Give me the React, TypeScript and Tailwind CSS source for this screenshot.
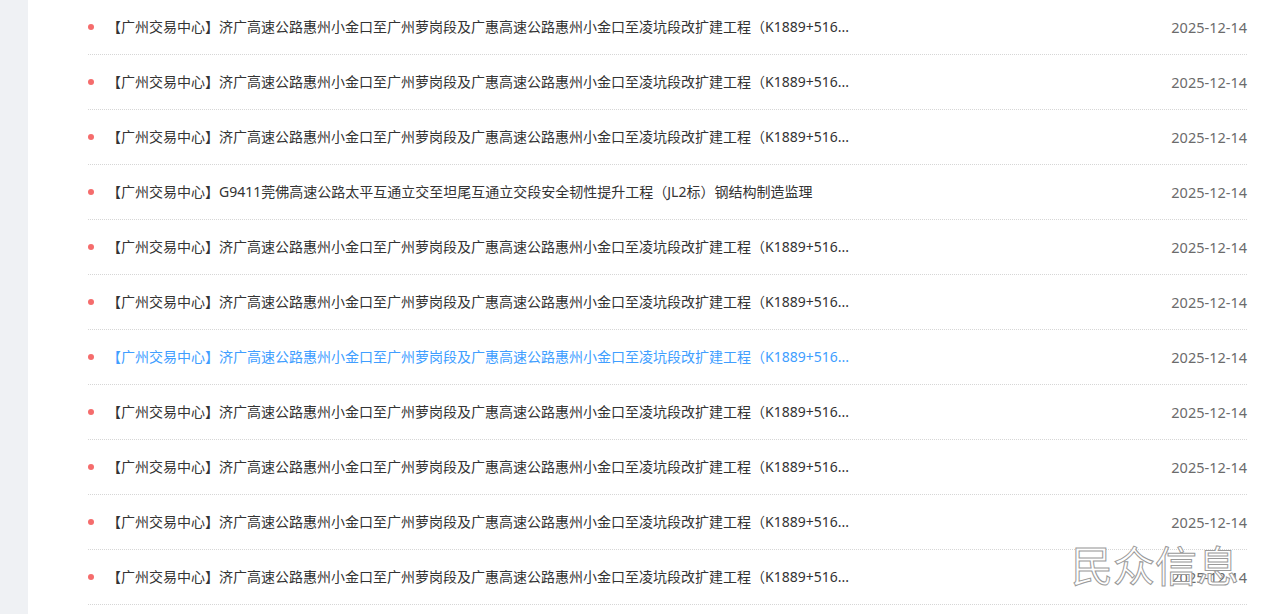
import React from "react";

const LONG = "【广州交易中心】济广高速公路惠州小金口至广州萝岗段及广惠高速公路惠州小金口至凌坑段改扩建工程（K1889+516...";
const G = "【广州交易中心】G9411莞佛高速公路太平互通立交至坦尾互通立交段安全韧性提升工程（JL2标）钢结构制造监理";

const rows = [
  { t: LONG },
  { t: LONG },
  { t: LONG },
  { t: G },
  { t: LONG },
  { t: LONG },
  { t: LONG, active: true },
  { t: LONG },
  { t: LONG },
  { t: LONG },
  { t: LONG },
];

export default function App() {
  return (
    <div
      className="relative flex h-[614px] w-full overflow-hidden bg-white"
      style={{ fontFamily: '"Noto Sans", "Noto Sans CJK SC", sans-serif' }}
    >
      <div className="w-[28px] shrink-0 bg-[#eff1f4]" />
      <div className="flex-1 pl-[60px] pr-[16px]">
        <ul className="flex flex-col">
          {rows.map((r, i) => (
            <li
              key={i}
              className="flex h-[55px] items-center border-b border-dotted border-[#d6d6d6]"
            >
              <span className="mr-[13px] h-[6px] w-[6px] shrink-0 rounded-full bg-[#f56c6c]" />
              <span
                className={`text-[14px] leading-none whitespace-nowrap ${
                  r.active ? "text-[#409eff]" : "text-[#333333]"
                }`}
              >
                {r.t}
              </span>
              <span className="ml-auto text-[14.5px] leading-none text-[#6b6b6b]">2025-12-14</span>
            </li>
          ))}
        </ul>
      </div>
      <div
        className="pointer-events-none absolute right-[24px] bottom-[29px] text-[42px] leading-none text-white [-webkit-text-stroke:1px_#9a9a9a]"
        style={{ fontFamily: '"Noto Sans CJK SC", sans-serif' }}
      >
        民众信息
      </div>
    </div>
  );
}
